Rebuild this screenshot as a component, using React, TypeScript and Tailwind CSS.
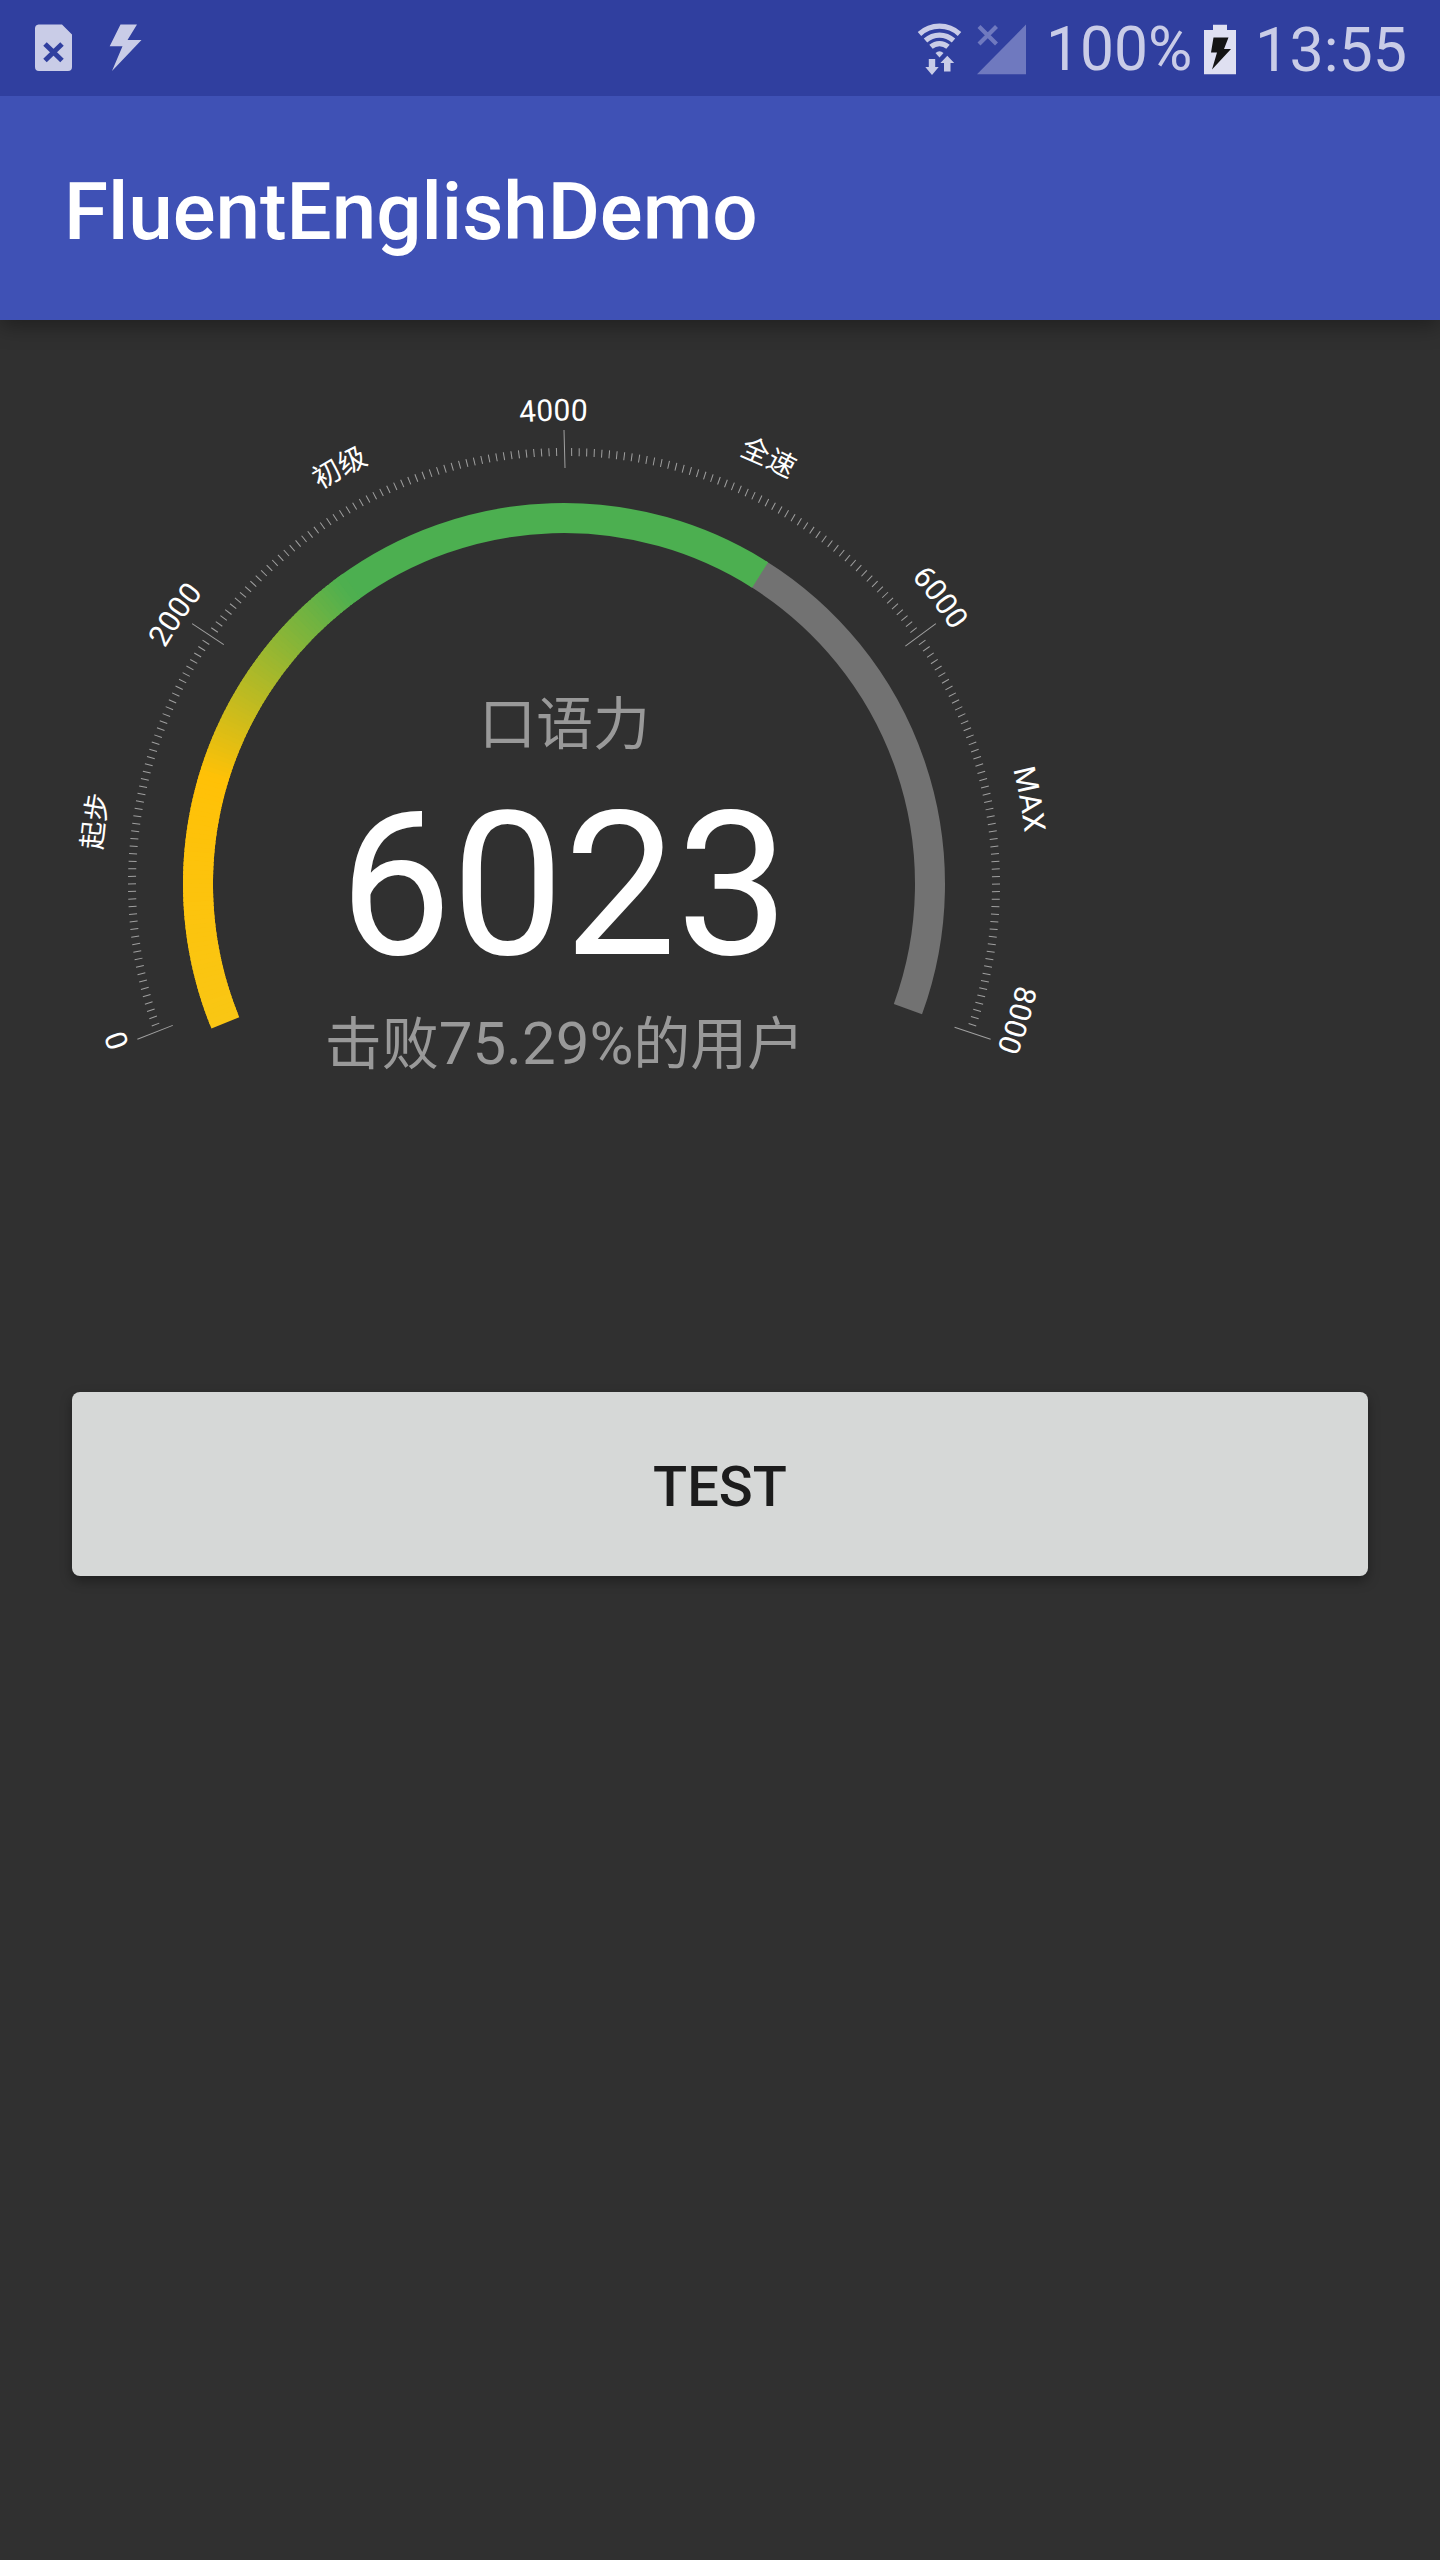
const CX = 564;
const CY = 564;

// Gauge angles are measured clockwise from the left horizontal.
const point = (angle: number, radius: number) => {
  const a = ((angle + 180) * Math.PI) / 180;
  return `${(CX + radius * Math.cos(a)).toFixed(2)} ${(CY + radius * Math.sin(a)).toFixed(2)}`;
};
const arc = (from: number, to: number, radius: number) =>
  `M${point(from, radius)}A${radius} ${radius} 0 ${to - from > 180 ? 1 : 0} 1 ${point(to, radius)}`;

const stops: [number, number[]][] = [
  [-22.3, [249, 198, 20]],
  [17, [255, 193, 7]],
  [54, [76, 175, 80]],
];
const colorAt = (angle: number) => {
  for (let i = 1; i < stops.length; i++) {
    const [a0, c0] = stops[i - 1];
    const [a1, c1] = stops[i];
    if (angle <= a1) {
      const t = (angle - a0) / (a1 - a0);
      return `rgb(${c0.map((v, k) => Math.round(v + (c1[k] - v) * t)).join(",")})`;
    }
  }
  return "rgb(76,175,80)";
};

const segments: { from: number; to: number }[] = [];
for (let a = -22.3; a < 54; a += 0.7) segments.push({ from: a, to: a + 1.2 });

const labels = [
  { text: "0", start: -20.34 },
  { text: "起步", start: 4.15, cjk: true },
  { text: "2000", start: 30.5 },
  { text: "初级", start: 58.2, cjk: true },
  { text: "4000", start: 84.5 },
  { text: "全速", start: 112.1, cjk: true },
  { text: "6000", start: 138.5 },
  { text: "MAX", start: 165.6 },
  { text: "8000", start: 192.5 },
];

const LABEL_R = 463.5;
const LABEL_FROM = -40;
const ticks = Array.from({ length: 221 }, (_, i) => i - 20);

function Gauge() {
  return (
    <svg className="block h-[880px] w-full" viewBox="0 0 1440 880" fontFamily="Roboto, 'Noto Sans CJK SC', sans-serif">
      <defs>
        <path id="label-path" d={arc(LABEL_FROM, 220, LABEL_R)} />
      </defs>
      <g stroke="#a0a0a0" strokeWidth="1">
        {ticks.map((a) => {
          const major = (a + 20) % 55 === 0;
          return (
            <line
              key={a}
              x1={CX}
              y1={CY - (major ? 454 : 436)}
              x2={CX + (major ? 1 : 0.2)}
              y2={CY - (major ? 416 : 428)}
              transform={`rotate(${a - 90} ${CX} ${CY})`}
            />
          );
        })}
      </g>
      <g fill="none" strokeWidth="30">
        <path d={arc(122, 200, 366)} stroke="#727272" />
        <path d={arc(53.8, 122.4, 366)} stroke="#4caf50" />
        {segments.map((s) => (
          <path key={s.from} d={arc(s.from, s.to, 366)} stroke={colorAt(s.from + 0.35)} />
        ))}
      </g>
      <g fill="#fff">
        {labels.map((l) => (
          <text key={l.text} fontSize={l.cjk ? 28 : 30}>
            <textPath href="#label-path" startOffset={((l.start - LABEL_FROM) * Math.PI * LABEL_R) / 180}>
              {l.text}
            </textPath>
          </text>
        ))}
      </g>
      <g textAnchor="middle">
        <text x="564.5" y="424" fontSize="57" fill="#999">口语力</text>
        <text x="564" y="634" fontSize="200" fill="#fff">6023</text>
        <text x="564.5" y="744" fontSize="57" fill="#999">
          击败<tspan fontSize="60">75.29%</tspan>的用户
        </text>
      </g>
    </svg>
  );
}

function StatusBar() {
  return (
    <div className="relative z-20 flex h-24 items-center bg-[#303f9f] text-[#c9cce7]">
      <svg className="h-24 w-[160px]" viewBox="0 0 160 96" fill="#c9cce7">
        <path d="M38.500 24.500H62L72 34.500V67a4 4 0 0 1-4 4H39a4 4 0 0 1-4-4V28.500a4 4 0 0 1 3.500-4Z" />
        <path d="M45 44l17 16.500M62 44L45 60.500" stroke="#303f9f" strokeWidth="5" />
        <path d="M120.500 24.500H137L127.500 40H141.500L112 71L122.500 46.300H109.700Z" />
      </svg>
      <div className="flex-1" />
      <svg className="mr-0.5 h-24 w-[120px]" viewBox="910 0 120 96" fill="none">
        <g stroke="#c9cce7" strokeWidth="5.200">
          <path d="M919.500 34a29.500 29.500 0 0 1 40 0" />
          <path d="M925.500 40.500a21 21 0 0 1 28 0" />
          <path d="M931 46.800a13 13 0 0 1 17 0" />
        </g>
        <g fill="#c9cce7">
          <path d="M935.500 53q4-3.500 8 0L939.500 57.500Z" />
          <path d="M928.800 59h6.400v8h3.500L932 75l-6.700-8h3.500Z" />
          <path d="M944 71.500h6.500V63h3.700L947.300 55.800 940.400 63h3.600Z" />
        </g>
        <path d="M979 26.500l17.500 17.500M996.500 26.500L979 44" stroke="#6f79bf" strokeWidth="4.200" />
        <path d="M1026 24.500V74.300H977Z" fill="#6f79bf" />
      </svg>
      <span className="ml-[14px] w-[158px] whitespace-nowrap pt-1 font-[Roboto] text-[60.5px] leading-none">100%</span>
      <svg className="h-24 w-8" viewBox="1204 0 32 96">
        <path d="M1213 24.800h14V30h9V74.300h-32V30h9Z" fill="#dfe0f1" />
        <path d="M1213.500 37.500h15l-4.500 11.500h7L1212 69.500l5-17h-6Z" fill="#141414" />
      </svg>
      <span className="ml-[19px] mr-[33px] whitespace-nowrap pt-1 font-[Roboto] text-[61px] leading-none">13:55</span>
    </div>
  );
}

export default function App() {
  return (
    <div className="flex h-[2560px] w-[1440px] flex-col overflow-hidden bg-[#303030]">
      <StatusBar />
      <header className="relative z-10 flex h-56 items-center bg-[#3f51b5] px-16 shadow-[0_6px_20px_rgba(0,0,0,0.35)]">
        <h1 className="pt-2 font-[Roboto] text-[80px] font-medium leading-none tracking-[-0.06px] text-white">
          FluentEnglishDemo
        </h1>
      </header>
      <main className="flex flex-col">
        <Gauge />
        <div className="px-[72px] pt-[192px]">
          <button className="flex h-[184px] w-full items-center justify-center rounded-lg bg-[#d6d8d7] pt-1.5 font-[Roboto] text-[56px] font-medium leading-none text-[#1c1c1c] shadow-[0_5px_12px_rgba(0,0,0,0.35)]">
            TEST
          </button>
        </div>
      </main>
    </div>
  );
}
